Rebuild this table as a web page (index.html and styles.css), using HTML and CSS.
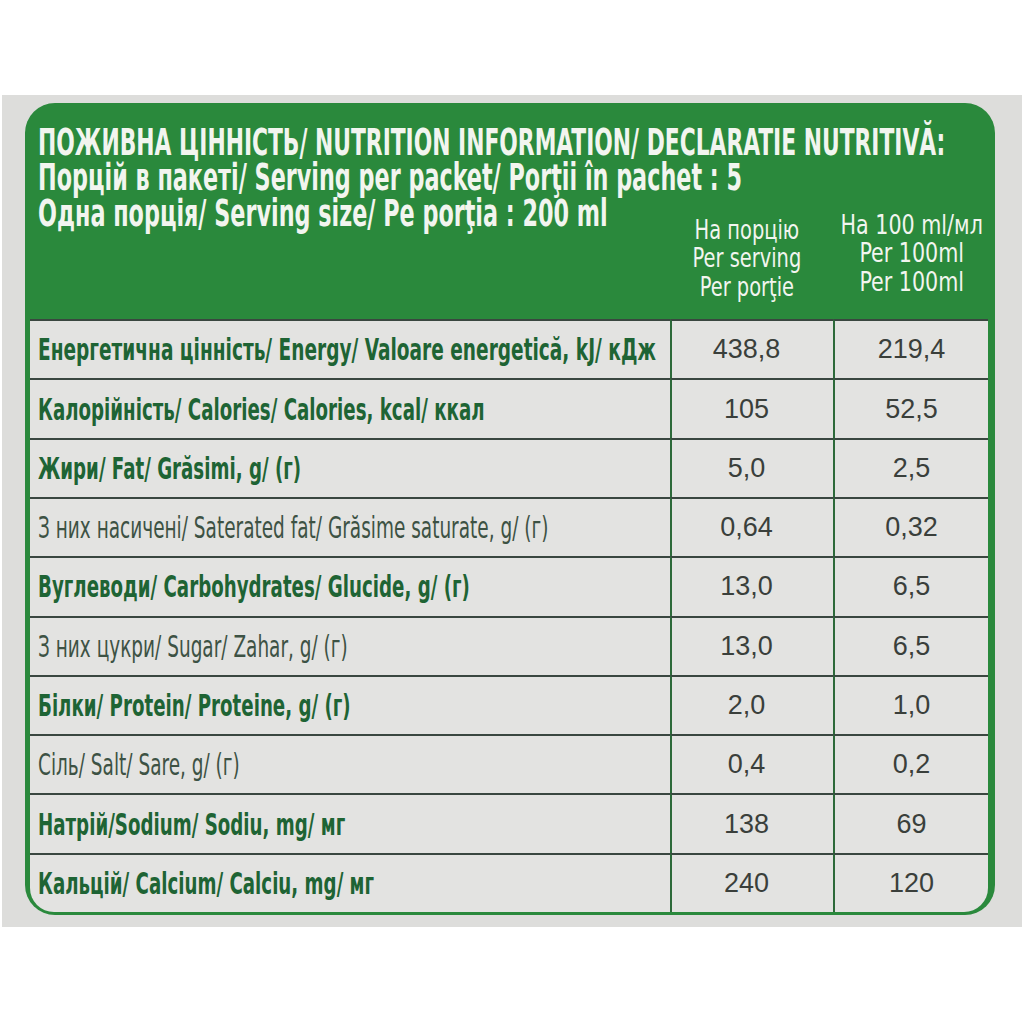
FILE: index.html
```html
<!DOCTYPE html>
<html lang="uk">
<head>
<meta charset="utf-8">
<title>Nutrition information</title>
<link rel="stylesheet" href="styles.css">
</head>
<body>
<div class="photo">
  <div class="label">
    <div class="head">
      <div class="hl full first"><span class="sx">ПОЖИВНА ЦІННІСТЬ/ NUTRITION INFORMATION/ DECLARATIE NUTRITIVĂ:</span></div>
      <div class="hl full"><span class="sx">Порцій в пакеті/ Serving per packet/ Porţii în pachet : 5</span></div>
      <div class="hl"><span class="sx">Одна порція/ Serving size/ Pe porţia : 200 ml</span></div>
      <div class="colh c2"><span class="cx">На порцію<br>Per serving<br>Per porţie</span></div>
      <div class="colh c3"><span class="cx">На 100 ml/мл<br>Per 100ml<br>Per 100ml</span></div>
    </div>
    <div class="table">
      <div class="cell name b wide"><span class="sx">Енергетична цінність/ Energy/ Valoare energetică, kJ/ кДж</span></div>
      <div class="cell num n2">438,8</div>
      <div class="cell num n3">219,4</div>

      <div class="cell name b"><span class="sx">Калорійність/ Calories/ Calories, kcal/ ккал</span></div>
      <div class="cell num n2">105</div>
      <div class="cell num n3">52,5</div>

      <div class="cell name b"><span class="sx">Жири/ Fat/ Grăsimi, g/ (г)</span></div>
      <div class="cell num n2">5,0</div>
      <div class="cell num n3">2,5</div>

      <div class="cell name l"><span class="sx">З них насичені/ Saterated fat/ Grăsime saturate, g/ (г)</span></div>
      <div class="cell num n2">0,64</div>
      <div class="cell num n3">0,32</div>

      <div class="cell name b"><span class="sx">Вуглеводи/ Carbohydrates/ Glucide, g/ (г)</span></div>
      <div class="cell num n2">13,0</div>
      <div class="cell num n3">6,5</div>

      <div class="cell name l"><span class="sx">З них цукри/ Sugar/ Zahar, g/ (г)</span></div>
      <div class="cell num n2">13,0</div>
      <div class="cell num n3">6,5</div>

      <div class="cell name b"><span class="sx">Білки/ Protein/ Proteine, g/ (г)</span></div>
      <div class="cell num n2">2,0</div>
      <div class="cell num n3">1,0</div>

      <div class="cell name l"><span class="sx">Сіль/ Salt/ Sare, g/ (г)</span></div>
      <div class="cell num n2">0,4</div>
      <div class="cell num n3">0,2</div>

      <div class="cell name b"><span class="sx">Натрій/Sodium/ Sodiu, mg/ мг</span></div>
      <div class="cell num n2">138</div>
      <div class="cell num n3">69</div>

      <div class="cell name b"><span class="sx">Кальцій/ Calcium/ Calciu, mg/ мг</span></div>
      <div class="cell num n2">240</div>
      <div class="cell num n3">120</div>
    </div>
  </div>
</div>
</body>
</html>
```

FILE: styles.css
```css
* { box-sizing: border-box; }

html, body {
  margin: 0;
  padding: 0;
  background: #ffffff;
}

body {
  font-family: "DejaVu Sans Condensed", "DejaVu Sans", sans-serif;
}

.photo {
  margin: 95px 2px 0 2px;
  height: 832px;
  background: #dddddb;
  padding: 8px 27px 0 23px;
}

.label {
  background: #2a893c;
  border-radius: 30px;
  padding: 0 7px 3px 5px;
}

.head {
  display: grid;
  grid-template-columns: 640px 161px 153px;
  column-gap: 2px;
  padding: 21.5px 0 17.5px 0;
  color: #f2f5ef;
}

.hl {
  font-weight: bold;
  font-size: 37px;
  line-height: 35.5px;
  padding-left: 8px;
  white-space: nowrap;
  min-width: 0;
}

.hl.full { grid-column: 1 / -1; }

.sx {
  display: inline-block;
  white-space: nowrap;
  transform-origin: left center;
}

.hl .sx { transform: scaleX(0.67); margin-right: -600px; }
.hl.first .sx { transform: scaleX(0.655); }

.colh {
  display: flex;
  justify-content: center;
  font-size: 27px;
  line-height: 28.7px;
  text-align: center;
  white-space: nowrap;
  min-width: 0;
}

.cx {
  display: block;
  flex: none;
  transform-origin: center top;
}

.colh.c2 { margin-top: 20px; padding-right: 12px; }
.colh.c2 .cx { transform: scaleX(0.8); }
.colh.c3 { margin-top: 15px; }
.colh.c3 .cx { transform: scaleX(0.85); }

.table {
  display: grid;
  grid-template-columns: 640px 163px 155px;
  grid-auto-rows: 59.3px;
  background: #e3e3e1;
  border-radius: 0 0 24px 24px;
  overflow: hidden;
}

.cell {
  border-top: 2px solid #3a4740;
  display: flex;
  align-items: center;
  min-width: 0;
}

.name {
  padding-left: 8px;
  font-size: 30px;
}

.name .sx { margin-right: -400px; }

.name.b {
  font-weight: bold;
  color: #1e6434;
}

.name.b .sx { transform: scaleX(0.675); }
.name.b.wide .sx { transform: scaleX(0.687); }

.name.l {
  font-weight: normal;
  color: #3d5244;
}

.name.l .sx { transform: scaleX(0.685); }

.num {
  border-left: 2px solid #2d6a3a;
  justify-content: center;
  font-family: "Liberation Sans", Arial, sans-serif;
  font-size: 27px;
  color: #3a3f3b;
}

.num.n2 { padding-right: 12px; }
```
